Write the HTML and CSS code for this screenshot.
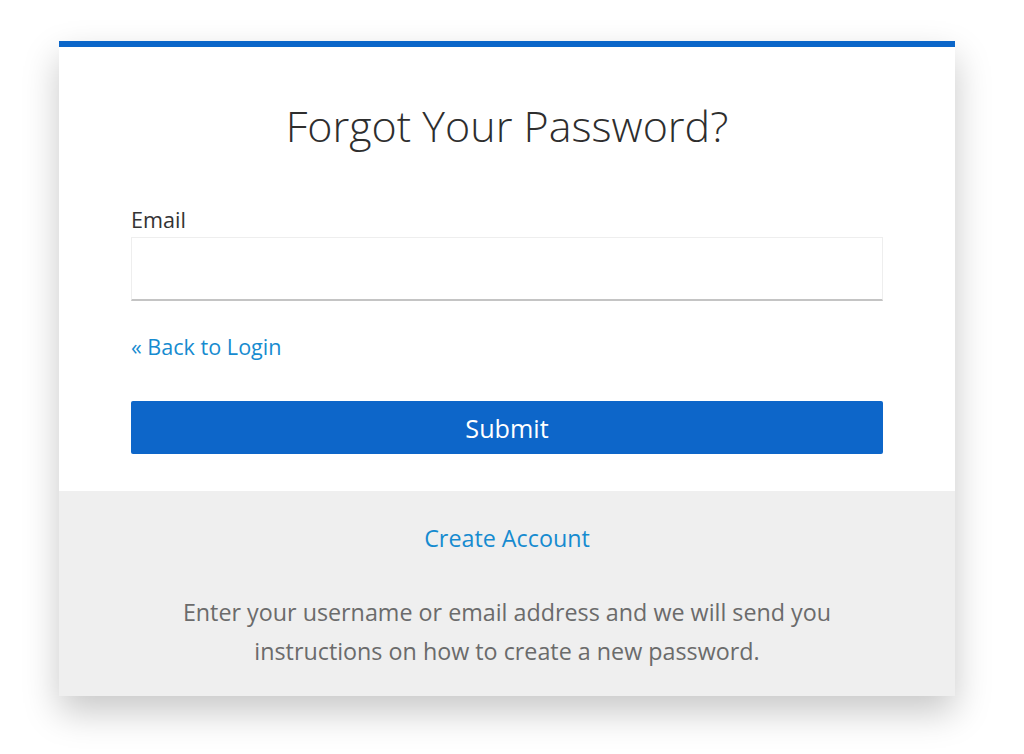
FILE: index.html
```html
<!DOCTYPE html>
<html lang="en">
<head>
<meta charset="UTF-8">
<meta name="viewport" content="width=device-width, initial-scale=1.0">
<title>Forgot Your Password?</title>
<link rel="stylesheet" href="styles.css">
</head>
<body>
    <div class="card">
        <form class="card-body" id="forgotForm">
            <h1 class="title">Forgot Your Password?</h1>
            <label class="field-label" for="email">Email</label>
            <input class="field-input" type="text" id="email">
            <a class="back-link" href="#">&laquo; Back to Login</a>
            <button class="submit-btn" type="submit">Submit</button>
        </form>
        <div class="card-footer">
            <a class="create-link" href="#">Create Account</a>
            <p class="hint">Enter your username or email address and we will send you<br>instructions on how to create a new password.</p>
        </div>
    </div>
</body>
</html>
```

FILE: styles.css
```css
body {
    margin: 0;
    padding-bottom: 60px;
    background-color: #fff;
    font-family: "Open Sans", "Liberation Sans", sans-serif;
}

.card {
    width: 896px;
    margin: 41px 0 0 59px;
    border-top: 6px solid #0b66c9;
    background-color: #fff;
    box-shadow: 0 16px 34px rgba(0, 0, 0, 0.22);
}

.card-body {
    display: flex;
    flex-direction: column;
    margin: 0;
    padding: 51px 72px 37px;
}

.title {
    margin: 0 0 52px;
    font-size: 43px;
    line-height: 56px;
    font-weight: 300;
    color: #2e2e2e;
    text-align: center;
}

.field-label {
    margin-bottom: 3px;
    font-size: 21.6px;
    line-height: 28px;
    color: #333;
}

.field-input {
    box-sizing: border-box;
    height: 64px;
    margin: 0;
    padding: 0 12px;
    border: 1px solid #eee;
    border-bottom: 2px solid #c4c4c4;
    font-family: inherit;
    font-size: 20px;
    outline: none;
}

.back-link {
    align-self: flex-start;
    margin-top: 32px;
    font-size: 21.6px;
    line-height: 28px;
    color: #168bd0;
    text-decoration: none;
}

.submit-btn {
    height: 53px;
    margin-top: 40px;
    border: none;
    border-radius: 2px;
    background-color: #0d66c9;
    color: #fff;
    font-family: inherit;
    font-size: 25.2px;
    cursor: pointer;
}

.card-footer {
    padding: 32px 40px 25px;
    background-color: #efefef;
    text-align: center;
}

.create-link {
    display: block;
    font-size: 23.3px;
    line-height: 30px;
    color: #168bd0;
    text-decoration: none;
}

.hint {
    margin: 40px 0 0;
    font-size: 23.3px;
    line-height: 39px;
    color: #6b6b6b;
}
```
